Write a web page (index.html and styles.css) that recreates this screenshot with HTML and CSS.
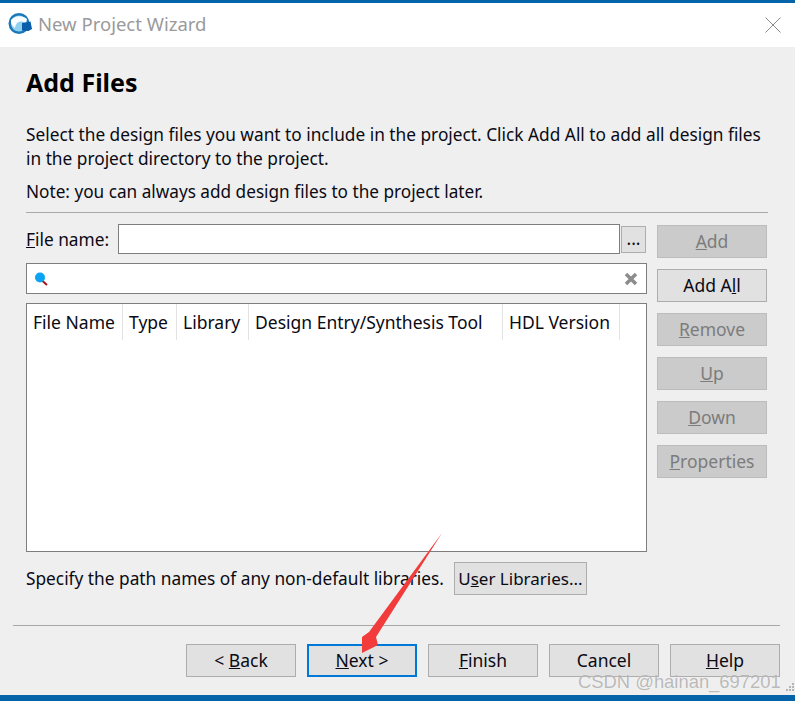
FILE: index.html
```html
<!DOCTYPE html>
<html lang="en">
<head>
<meta charset="utf-8">
<title>New Project Wizard</title>
<link rel="stylesheet" href="styles.css">
</head>
<body>
<div class="window">
  <header class="titlebar">
    <svg class="logo" width="24" height="23" viewBox="0 0 24 23">
      <circle cx="11" cy="11.500" r="10.500" fill="#1878b8"/>
      <circle cx="11" cy="11.500" r="8" fill="#8fd0ee"/>
      <path d="M3 8C7 3.500 14 3 19 7L18 11C13 8 8 9 7 16C4.500 14.500 2.500 11.500 3 8Z" fill="#fafdff"/>
      <path d="M14 11L22.500 9.500L24 17L20.500 19L14 18.500Z" fill="#0a5da8"/>
    </svg>
    <span class="title">New Project Wizard</span>
    <svg class="close" width="16" height="16" viewBox="0 0 16 16"><path d="M.5.500L15.500 15.500M15.500.500L.5 15.500" stroke="#8a8a8a" fill="none"/></svg>
  </header>
  <main class="content">
    <div class="intro">
      <h1>Add Files</h1>
      <p class="desc">Select the design files you want to include in the project. Click Add All to add all design files<br>in the project directory to the project.</p>
      <p class="note">Note: you can always add design files to the project later.</p>
    </div>
    <div class="panel">
      <div class="left">
        <div class="file-row">
          <label class="file-label"><u>F</u>ile name:</label>
          <div class="field file-input"></div>
          <button class="btn browse">...</button>
        </div>
        <div class="field search">
          <svg width="16" height="16" viewBox="0 0 16 16"><path d="M8 9.500L13 14" stroke="#a3141c" stroke-width="2"/><circle cx="6" cy="6.500" r="5" fill="#0ca4f2"/></svg>
          <svg width="16" height="16" viewBox="0 0 16 16"><path d="M3 3L13 13M13 3L3 13" stroke="#8c8c8c" stroke-width="3.500"/></svg>
        </div>
        <div class="table">
          <div class="thead">
            <span class="th c1">File Name</span>
            <span class="th c2">Type</span>
            <span class="th c3">Library</span>
            <span class="th c4">Design Entry/Synthesis Tool</span>
            <span class="th c5">HDL Version</span>
          </div>
        </div>
      </div>
      <div class="side">
        <button class="btn off"><u>A</u>dd</button>
        <button class="btn">Add A<u>l</u>l</button>
        <button class="btn off"><u>R</u>emove</button>
        <button class="btn off"><u>U</u>p</button>
        <button class="btn off"><u>D</u>own</button>
        <button class="btn off"><u>P</u>roperties</button>
      </div>
    </div>
    <div class="lib-row">
      <span>Specify the path names of any non-default libraries.</span>
      <button class="btn lib">U<u>s</u>er Libraries...</button>
    </div>
    <footer class="footer">
      <button class="btn">&lt; <u>B</u>ack</button>
      <button class="btn primary"><u>N</u>ext &gt;</button>
      <button class="btn"><u>F</u>inish</button>
      <button class="btn">Cancel</button>
      <button class="btn"><u>H</u>elp</button>
    </footer>
  </main>
  <div class="bottom"></div>
  <svg class="arrow" width="795" height="701" viewBox="0 0 795 701"><polygon points="442,533 376,637 378,645 362,653 362,637 369,632" fill="#f23c3c"/></svg>
  <span class="mark">CSDN @hainan_697201</span>
  <svg class="grip" width="10" height="10" viewBox="0 0 10 10"><path d="M7 1h2v2H7zM4 4h2v2H4zM7 4h2v2H7zM1 7h2v2H1zM4 7h2v2H4zM7 7h2v2H7z" fill="#b4b4b4"/></svg>
</div>
</body>
</html>
```
FILE: styles.css
```css
* { box-sizing: border-box; }
html, body { margin: 0; padding: 0; }
body { font-family: "Noto Sans", sans-serif; font-size: 17.3px; color: #0a0a14; background: #efefef; }
.window { position: relative; width: 795px; height: 701px; display: flex; flex-direction: column; overflow: hidden; border-top: 3px solid #0563a9; }
.titlebar { height: 44px; flex: none; background: #fff; display: flex; align-items: center; padding: 0 14px 0 8px; }
.logo { flex: none; margin-bottom: 3px; }
.title { margin-left: 6px; margin-bottom: 3px; font-size: 18.500px; color: #9a9a9a; flex: 1; }
.content { flex: 1; background: #efefef; display: flex; flex-direction: column; min-height: 0; }
.intro { margin: 0 27px 0 26px; height: 166px; border-bottom: 1px solid #a8a8a8; }
h1 { margin: 0; padding-top: 19px; font-size: 25px; line-height: 33px; font-weight: 700; color: #000; }
.desc { margin: 24px 0 0; line-height: 24px; }
.note { margin: 9px 0 0; font-size: 17.200px; line-height: 24px; }
.panel { display: flex; gap: 10px; margin: 11px 28px 0 26px; }
.left { width: 621px; }
.file-row { display: flex; align-items: center; height: 30px; }
.file-label { width: 92px; padding-top: 1px; }
.field { background: #fff; border: 1px solid #7e7e7e; }
.file-input { width: 502px; height: 30px; }
.btn { font: inherit; font-size: 17.500px; color: inherit; background: #e1e1e1; border: 1px solid #adadad; padding: 0; height: 33px; width: 110px; line-height: 1; }
.browse { width: 25px; height: 27px; margin-left: 1px; }
.search { margin-top: 9px; height: 31px; display: flex; align-items: center; justify-content: space-between; padding: 0 7px; }
.table { margin-top: 9px; height: 249px; background: #fff; border: 1px solid #7e7e7e; }
.thead { display: flex; height: 36px; }
.th { padding-left: 6px; font-size: 17.500px; line-height: 37px; border-right: 1px solid #e3e3e3; white-space: nowrap; }
.c1 { width: 96px; }
.c2 { width: 54px; }
.c3 { width: 72px; }
.c4 { width: 254px; }
.c5 { width: 117px; }
.side { width: 110px; padding-top: 1px; display: flex; flex-direction: column; gap: 11px; }
.off { background: #cbcbcb; color: #7c7c7c; border-color: #bcbcbc; }
.lib-row { display: flex; align-items: center; margin: 10px 0 0 26px; height: 33px; gap: 10px; }
.lib { width: 133px; font-size: 17px; }
.footer { margin: 30px 15px 0 13px; padding-top: 18px; border-top: 1px solid #a8a8a8; display: flex; justify-content: flex-end; gap: 11px; }
.primary { border: 2px solid #0078d7; }
.bottom { height: 6px; flex: none; background: #0563a9; }
.arrow { position: absolute; left: 0; top: -3px; pointer-events: none; }
.mark { position: absolute; left: 578px; top: 668px; font-family: "Liberation Sans", sans-serif; font-size: 18.400px; line-height: 22px; color: rgba(130, 130, 130, 0.55); text-shadow: 0 0 1px rgba(255, 255, 255, 0.8); }
.grip { position: absolute; right: 0; top: 679px; }
```
